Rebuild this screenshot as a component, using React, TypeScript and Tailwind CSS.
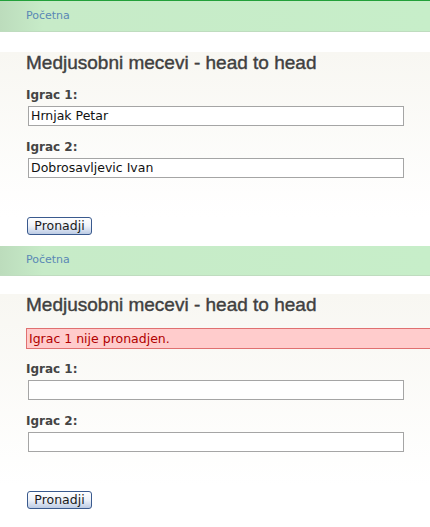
type Props = {
  topLine?: boolean;
  bandH: string;
  headMt: string;
  error?: string;
  igrac1: string;
  igrac2: string;
};

const verdana = "font-['DejaVu_Sans',Verdana,sans-serif]";

function Field({ label, value, mt }: { label: string; value: string; mt: string }) {
  return (
    <div className={mt}>
      <label className={`block text-[12px] leading-[14px] font-bold text-[#444] ${verdana}`}>
        {label}
      </label>
      <div
        className={`mt-[4px] ml-[2px] w-[376px] h-[20px] border border-[#a5a5a5] bg-white pl-[2px] text-[12.5px] leading-[18px] text-[#111] ${verdana}`}
      >
        {value}
      </div>
    </div>
  );
}

function HeadToHead({ topLine, bandH, headMt, error, igrac1, igrac2 }: Props) {
  return (
    <div>
      {topLine && <div className="h-[1px] bg-[#22a03a]" />}
      <div
        className={`${bandH} flex items-center pl-[26px] pb-[1px] bg-linear-to-r from-[#bcdcbc] via-[#c7ebc8] via-[10%] to-[#c7eec9] border-b border-[#bfdcbf]`}
      >
        <a className={`text-[11px] leading-[14px] text-[#5a88b5] ${verdana}`}>Početna</a>
      </div>
      <div className="bg-linear-to-b from-[#f8f7f2] to-white to-[85%] pl-[26px] pb-[10px]">
        <h2
          className={`${headMt} text-[19px] leading-[22px] text-[#404040] [-webkit-text-stroke:0.4px_#404040] font-['Liberation_Sans',Arial,sans-serif]`}
        >
          Medjusobni mecevi - head to head
        </h2>
        {error ? (
          <>
            <div
              className={`mt-[12px] w-[420px] h-[21px] bg-[#ffcccc] border border-[#e07070] pl-[2px] text-[12.5px] leading-[19px] text-[#b00000] ${verdana}`}
            >
              {error}
            </div>
            <Field label="Igrac 1:" value={igrac1} mt="mt-[13px]" />
          </>
        ) : (
          <Field label="Igrac 1:" value={igrac1} mt="mt-[14px]" />
        )}
        <Field label="Igrac 2:" value={igrac2} mt="mt-[14px]" />
        <button
          className={`mt-[39px] ml-[1px] w-[65px] h-[18px] rounded-[3px] border border-[#3a5a8e] bg-linear-to-b from-white via-[#eef2f9] to-[#bccbe4] text-[12.5px] leading-[14px] text-[#1a1a1a] ${verdana}`}
        >
          Pronadji
        </button>
      </div>
    </div>
  );
}

export default function App() {
  return (
    <div className="w-[430px] h-[527px] overflow-hidden bg-white">
      <HeadToHead
        topLine
        bandH="h-[31px]"
        headMt="mt-[20px]"
        igrac1="Hrnjak Petar"
        igrac2="Dobrosavljevic Ivan"
      />
      <HeadToHead
        bandH="h-[30px]"
        headMt="mt-[18px]"
        error="Igrac 1 nije pronadjen."
        igrac1=""
        igrac2=""
      />
    </div>
  );
}
